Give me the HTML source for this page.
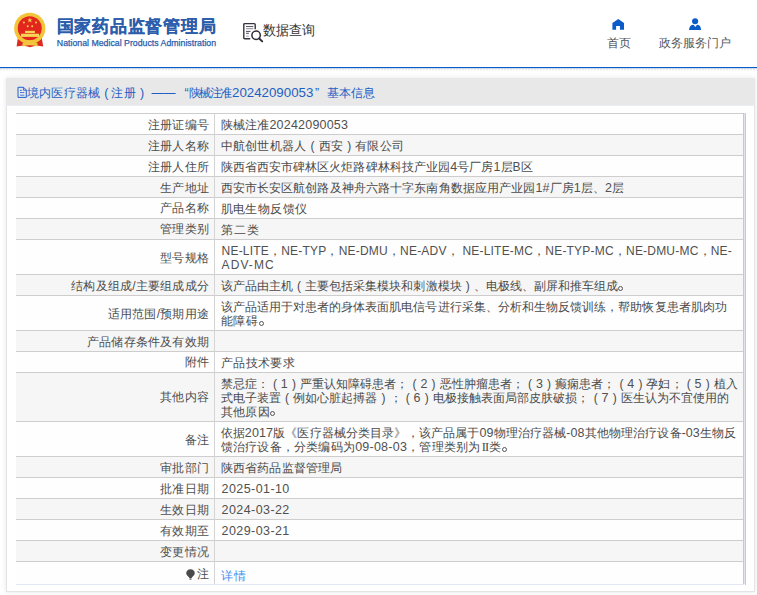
<!DOCTYPE html>
<html><head><meta charset="utf-8">
<style>
html,body{margin:0;padding:0;}
body{width:757px;height:595px;overflow:hidden;background:#fff;position:relative;font-family:"Liberation Sans",sans-serif;color:#4a4a4a;}
.abs{position:absolute;}
.title{position:absolute;left:56.5px;top:15px;font-size:17px;letter-spacing:0.8px;font-weight:bold;color:#2b5dab;-webkit-text-stroke:0.1px #2b5dab;white-space:nowrap;line-height:24px;}
.sub{position:absolute;left:56.8px;top:38.2px;font-size:8.77px;color:#2b5dab;-webkit-text-stroke:0.25px #2b5dab;white-space:nowrap;line-height:11px;}
.query{position:absolute;left:262.5px;top:21.3px;font-size:14px;color:#333;white-space:nowrap;line-height:18px;transform:scaleX(0.93);transform-origin:0 0;}
.nav{position:absolute;font-size:12px;color:#555;white-space:nowrap;line-height:14px;}
.blue{position:absolute;left:0;top:67px;width:757px;height:1px;background:#0a5bc4;}
.blue2{position:absolute;left:0;top:68px;width:757px;height:1px;background:#c8dbf3;}
.hatch{position:absolute;left:0;top:69px;width:757px;height:2px;background:repeating-linear-gradient(135deg,#fff 0 1.2px,#d9d9d9 1.2px 2.1px,#fff 2.1px 3px);}
.panel{position:absolute;left:6px;top:78px;width:747px;height:512px;background:#fff;border:1px solid #e4e4e4;box-shadow:0 0 5px rgba(0,0,0,0.1);}
.phead{position:absolute;left:6px;top:78px;width:749px;height:27px;background:#e8e8e8;border-bottom:1px solid #eaeff7;}
.pt{position:absolute;top:85.8px;font-size:12px;color:#1f5fc4;white-space:nowrap;line-height:14px;letter-spacing:0.2px;}
.ptl{font-size:12.5px;letter-spacing:0;}
.row{position:absolute;left:16px;width:727px;}
.hl{position:absolute;left:16px;width:727px;height:1px;background:#cdcdcd;}
.vl{position:absolute;left:214px;top:113px;width:1px;height:471px;background:#d4d4d4;}
.rb1{position:absolute;left:743px;top:113px;width:1px;height:471px;background:#c9c9c9;}
.rb2{position:absolute;left:744px;top:113px;width:1px;height:471px;background:#e3e5ec;}
.rb3{position:absolute;left:745px;top:113px;width:1px;height:472px;background:#c9c9cf;}
.bot{position:absolute;left:16px;top:584px;width:728px;height:1px;background:#e2e6f0;}
.lab{position:absolute;right:548px;font-size:12px;letter-spacing:0.2px;line-height:14.1px;white-space:nowrap;text-align:right;color:#4d4d4d;}
.lab .d,.lab .e{font-size:12px;color:#505050;}
.val{position:absolute;left:220.6px;font-size:12px;letter-spacing:0.4px;line-height:14.1px;white-space:nowrap;color:#4a4a4a;}
.d{font-size:12.5px;color:#505050;}
.e{font-size:12px;color:#505050;}
.r2{display:inline-block;width:9px;text-align:center;font-family:"Liberation Serif",serif;letter-spacing:-0.9px;font-size:12.5px;}
.fp{display:inline-block;width:12px;text-align:center;font-size:12px;letter-spacing:0;text-indent:0.2px;}
.dot{display:inline-block;width:12px;height:8px;position:relative;vertical-align:0;}
.dot:before{content:"";position:absolute;left:0px;bottom:-0.6px;width:3px;height:3px;border:1.05px solid #555;border-radius:50%;}
.link{color:#3b8ef0;}
.pin{display:inline-block;vertical-align:-1.5px;margin-right:2.2px;}
</style></head><body>
<svg class="abs" style="left:8px;top:8px" width="45" height="45" viewBox="0 0 45 45">
 <path d="M10 29 L8.6 38.6 L15.5 37.6 L22 39.2 L28.5 37.6 L35.2 38.6 L33.6 29 Z" fill="#dc2a20"/>
 <circle cx="21.75" cy="20.4" r="15.6" fill="#f3c43a"/>
 <circle cx="21.75" cy="20.3" r="12" fill="#e2261d"/>
 <polygon points="21.9,9.6 22.6,11.4 24.5,11.4 23,12.6 23.6,14.5 21.9,13.3 20.2,14.5 20.8,12.6 19.3,11.4 21.2,11.4" fill="#f6d24a"/>
 <circle cx="15.9" cy="14.4" r="1" fill="#f6d24a"/><circle cx="28" cy="14.4" r="1" fill="#f6d24a"/>
 <circle cx="19.7" cy="18.2" r="1" fill="#f6d24a"/><circle cx="24.2" cy="18.2" r="1" fill="#f6d24a"/>
 <rect x="17" y="22.8" width="9.9" height="2.2" fill="#f7d655"/>
 <rect x="13" y="25.7" width="18" height="3.2" fill="#f7d655"/>
 <path d="M9.5 28.5 Q21.75 36.5 34 28.5 L33 31.5 Q21.75 38.5 10.5 31.5 Z" fill="#f3c43a"/>
 <path d="M14.5 35.2 Q22 32.5 29.5 35.2 L29.5 38.4 Q22 36 14.5 38.4 Z" fill="#f2c640"/>
</svg>
<div class="title">国家药品监督管理局</div>
<div class="sub">National Medical Products Administration</div>
<svg class="abs" style="left:242px;top:21px" width="22" height="22" viewBox="0 0 22 22">
 <path d="M8.2 17.7 H2.8 Q1.8 17.7 1.8 16.7 V3.6 Q1.8 2.6 2.8 2.6 H12.2 Q13.2 2.6 13.2 3.6 V8.2" fill="none" stroke="#34343f" stroke-width="1.4"/>
 <rect x="4" y="5" width="7.3" height="1" fill="#5c5c68"/>
 <rect x="4" y="6.9" width="7.3" height="1.4" fill="#a4a4ae"/>
 <rect x="4" y="9.9" width="4.5" height="1" fill="#4a4a56"/>
 <rect x="4" y="11.8" width="2.9" height="1" fill="#4a4a56"/>
 <rect x="4" y="14.6" width="2.9" height="1" fill="#a4a4ae"/>
 <circle cx="14.1" cy="14.2" r="4.2" fill="#fff" stroke="#2c2c38" stroke-width="1.5"/>
 <path d="M17.2 17.5 L20.2 20.4" stroke="#2c2c38" stroke-width="1.9" stroke-linecap="round"/>
</svg>
<div class="query">数据查询</div>
<svg class="abs" style="left:611px;top:18px" width="14" height="13" viewBox="0 0 14 13">
 <path d="M7.3 1.0 L13 5.1 L13 11.8 L8.95 11.8 L8.95 7.9 L5.1 7.9 L5.1 11.8 L1.4 11.8 L1.4 5.1 Z" fill="#0b5cc8"/>
</svg>
<div class="nav" style="left:607px;top:36px">首页</div>
<svg class="abs" style="left:688px;top:17px" width="14" height="14" viewBox="0 0 14 14">
 <circle cx="7.1" cy="4.25" r="3.05" fill="#0b5cc8"/>
 <path d="M1 13.1 Q1.4 7.8 5.6 7.8 L7.3 9.9 L9 7.8 Q12.8 7.8 13.1 13.1 Z" fill="#0b5cc8"/>
</svg>
<div class="nav" style="left:659px;top:36px">政务服务门户</div>
<div class="blue"></div><div class="blue2"></div>
<svg class="abs" style="left:0;top:68px" width="757" height="3"><defs><pattern id="hp" width="3" height="3" patternUnits="userSpaceOnUse"><path d="M0 2.6 L2.4 0.2" stroke="#d4d4d4" stroke-width="0.9"/></pattern></defs><rect width="757" height="3" fill="url(#hp)"/></svg>
<div class="panel"></div>
<div class="phead"></div>
<svg class="abs" style="left:17px;top:86px" width="11" height="13" viewBox="0 0 11 13">
 <path d="M1 1.3 H6.6 L9.3 4 V11.4 H1 Z" fill="none" stroke="#1f5fd0" stroke-width="1"/>
 <path d="M6.4 1.5 V4.2 H9.1" fill="none" stroke="#1f5fd0" stroke-width="0.9"/>
 <rect x="3" y="3.9" width="1.8" height="0.9" fill="#1f5fd0"/>
 <rect x="3" y="6.1" width="4.3" height="0.9" fill="#3a70d4"/>
 <rect x="3" y="8.7" width="4.3" height="0.9" fill="#3a70d4"/>
</svg>
<div class="pt" style="left:27px">境内医疗器械</div>
<div class="pt ptl" style="left:104.2px">(</div>
<div class="pt" style="left:111.4px">注册</div>
<div class="pt ptl" style="left:140px">)</div>
<div class="pt" style="left:151.5px;letter-spacing:0">——</div>
<div class="pt ptl" style="left:184.5px">“</div>
<div class="pt" style="left:188.5px;letter-spacing:-1.4px">陕械注准</div>
<div class="pt ptl" style="left:232px;font-size:13.3px">20242090053</div>
<div class="pt ptl" style="left:315px">”</div>
<div class="pt" style="left:327px;letter-spacing:0">基本信息</div>
<div class="row" style="top:113.20px;height:21.10px;background:#fefefe"></div>
<div class="lab" style="top:117.50px">注册证编号</div>
<div class="val" id="v0" style="top:117.70px;letter-spacing:0.207px">陕械注准<span class="d">20242090053</span></div>
<div class="row" style="top:134.30px;height:21.10px;background:#f6f6f6"></div>
<div class="lab" style="top:138.60px">注册人名称</div>
<div class="val" id="v1" style="top:138.80px;letter-spacing:0.271px">中航创世机器人<span class="fp">(</span>西安<span class="fp">)</span>有限公司</div>
<div class="row" style="top:155.40px;height:21.20px;background:#fefefe"></div>
<div class="lab" style="top:159.75px">注册人住所</div>
<div class="val" id="v2" style="top:159.95px;letter-spacing:0.082px">陕西省西安市碑林区火炬路碑林科技产业园<span class="d">4</span>号厂房<span class="d">1</span>层<span class="e">B</span>区</div>
<div class="row" style="top:176.60px;height:20.70px;background:#f6f6f6"></div>
<div class="lab" style="top:180.70px">生产地址</div>
<div class="val" id="v3" style="top:180.90px;letter-spacing:0.109px">西安市长安区航创路及神舟六路十字东南角数据应用产业园<span class="d">1#</span>厂房<span class="d">1</span>层、<span class="d">2</span>层</div>
<div class="row" style="top:197.30px;height:20.70px;background:#fefefe"></div>
<div class="lab" style="top:201.40px">产品名称</div>
<div class="val" id="v4" style="top:201.60px;letter-spacing:0.400px">肌电生物反馈仪</div>
<div class="row" style="top:218.00px;height:21.30px;background:#f6f6f6"></div>
<div class="lab" style="top:222.40px">管理类别</div>
<div class="val" id="v5" style="top:222.60px;letter-spacing:1.200px">第二类</div>
<div class="row" style="top:239.30px;height:35.40px;background:#fefefe"></div>
<div class="lab" style="top:250.75px">型号规格</div>
<div class="val" id="v6" style="top:243.90px;margin-left:1px;letter-spacing:0.203px"><span class="e">NE-LITE</span>，<span class="e">NE-TYP</span>，<span class="e">NE-DMU</span>，<span class="e">NE-ADV</span>， <span class="e">NE-LITE-MC</span>，<span class="e">NE-TYP-MC</span>，<span class="e">NE-DMU-MC</span>，<span class="e">NE-</span></div>
<div class="val" id="v7" style="top:258.00px;margin-left:1px;letter-spacing:1.084px"><span class="e">ADV-MC</span></div>
<div class="row" style="top:274.70px;height:21.10px;background:#f6f6f6"></div>
<div class="lab" style="top:279.00px">结构及组成/主要组成成分</div>
<div class="val" id="v8" style="top:279.20px;letter-spacing:0.057px">该产品由主机<span class="fp">(</span>主要包括采集模块和刺激模块<span class="fp">)</span>、电极线、副屏和推车组成<span class="dot"></span></div>
<div class="row" style="top:295.80px;height:34.60px;background:#fefefe"></div>
<div class="lab" style="top:306.85px">适用范围/预期用途</div>
<div class="val" id="v9" style="top:300.00px;letter-spacing:0.053px">该产品适用于对患者的身体表面肌电信号进行采集、分析和生物反馈训练，帮助恢复患者肌肉功</div>
<div class="val" id="v10" style="top:314.10px;letter-spacing:0.670px">能障碍<span class="dot"></span></div>
<div class="row" style="top:330.40px;height:20.80px;background:#f6f6f6"></div>
<div class="lab" style="top:334.55px">产品储存条件及有效期</div>
<div class="row" style="top:351.20px;height:20.80px;background:#fefefe"></div>
<div class="lab" style="top:355.35px">附件</div>
<div class="val" id="v11" style="top:355.55px;letter-spacing:0.472px">产品技术要求</div>
<div class="row" style="top:372.00px;height:49.30px;background:#f6f6f6"></div>
<div class="lab" style="top:390.40px">其他内容</div>
<div class="val" id="v12" style="top:376.50px;letter-spacing:0.065px">禁忌症：<span class="fp">(</span><span class="d">1</span><span class="fp">)</span>严重认知障碍患者；<span class="fp">(</span><span class="d">2</span><span class="fp">)</span>恶性肿瘤患者；<span class="fp">(</span><span class="d">3</span><span class="fp">)</span>癫痫患者；<span class="fp">(</span><span class="d">4</span><span class="fp">)</span>孕妇；<span class="fp">(</span><span class="d">5</span><span class="fp">)</span>植入</div>
<div class="val" id="v13" style="top:390.60px;letter-spacing:0.074px">式电子装置<span class="fp">(</span>例如心脏起搏器<span class="fp">)</span>；<span class="fp">(</span><span class="d">6</span><span class="fp">)</span>电极接触表面局部皮肤破损；<span class="fp">(</span><span class="d">7</span><span class="fp">)</span>医生认为不宜使用的</div>
<div class="val" id="v14" style="top:404.70px;letter-spacing:0.400px">其他原因<span class="dot"></span></div>
<div class="row" style="top:421.30px;height:35.30px;background:#fefefe"></div>
<div class="lab" style="top:432.70px">备注</div>
<div class="val" id="v15" style="top:425.85px;letter-spacing:0.128px">依据<span class="d">2017</span>版《医疗器械分类目录》，该产品属于<span class="d">09</span>物理治疗器械-<span class="d">08</span>其他物理治疗设备-<span class="d">03</span>生物反</div>
<div class="val" id="v16" style="top:439.95px;letter-spacing:0.233px">馈治疗设备，分类编码为<span class="d">09-08-03</span>，管理类别为<span class="r2">II</span>类<span class="dot"></span></div>
<div class="row" style="top:456.60px;height:21.10px;background:#f6f6f6"></div>
<div class="lab" style="top:460.90px">审批部门</div>
<div class="val" id="v17" style="top:461.10px;letter-spacing:0.200px">陕西省药品监督管理局</div>
<div class="row" style="top:477.70px;height:20.80px;background:#fefefe"></div>
<div class="lab" style="top:481.85px">批准日期</div>
<div class="val" id="v18" style="top:482.05px;margin-left:1px;letter-spacing:0.420px"><span class="d">2025-01-10</span></div>
<div class="row" style="top:498.50px;height:21.20px;background:#f6f6f6"></div>
<div class="lab" style="top:502.85px">生效日期</div>
<div class="val" id="v19" style="top:503.05px;margin-left:1px;letter-spacing:0.420px"><span class="d">2024-03-22</span></div>
<div class="row" style="top:519.70px;height:20.60px;background:#fefefe"></div>
<div class="lab" style="top:523.75px">有效期至</div>
<div class="val" id="v20" style="top:523.95px;margin-left:1px;letter-spacing:0.420px"><span class="d">2029-03-21</span></div>
<div class="row" style="top:540.30px;height:21.10px;background:#f6f6f6"></div>
<div class="lab" style="top:544.60px">变更情况</div>
<div class="row" style="top:561.40px;height:23.00px;background:#fefefe"></div>
<div class="lab" style="top:567.45px"><svg class="pin" width="9" height="11" viewBox="0 0 9 11"><path d="M4.5 0.2 C7.1 0.2 8.8 2.1 8.8 4.3 C8.8 6.3 6.6 7.4 5.6 9 L3.4 9 C2.4 7.4 0.2 6.3 0.2 4.3 C0.2 2.1 1.9 0.2 4.5 0.2 Z" fill="#4a4a4a"/><rect x="3.5" y="9.3" width="2" height="1.5" fill="#6a6a6a"/></svg>注</div>
<div class="val link" id="v21" style="top:568.65px;letter-spacing:1.200px">详情</div>
<div class="hl" style="top:113px"></div>
<div class="hl" style="top:134px"></div>
<div class="hl" style="top:155px"></div>
<div class="hl" style="top:176px"></div>
<div class="hl" style="top:197px"></div>
<div class="hl" style="top:218px"></div>
<div class="hl" style="top:239px"></div>
<div class="hl" style="top:274px"></div>
<div class="hl" style="top:295px"></div>
<div class="hl" style="top:330px"></div>
<div class="hl" style="top:351px"></div>
<div class="hl" style="top:372px"></div>
<div class="hl" style="top:421px"></div>
<div class="hl" style="top:456px"></div>
<div class="hl" style="top:477px"></div>
<div class="hl" style="top:498px"></div>
<div class="hl" style="top:519px"></div>
<div class="hl" style="top:540px"></div>
<div class="hl" style="top:561px"></div>
<div class="vl"></div>
<div class="rb1"></div><div class="rb2"></div><div class="rb3"></div>
<div class="bot"></div>
</body></html>
